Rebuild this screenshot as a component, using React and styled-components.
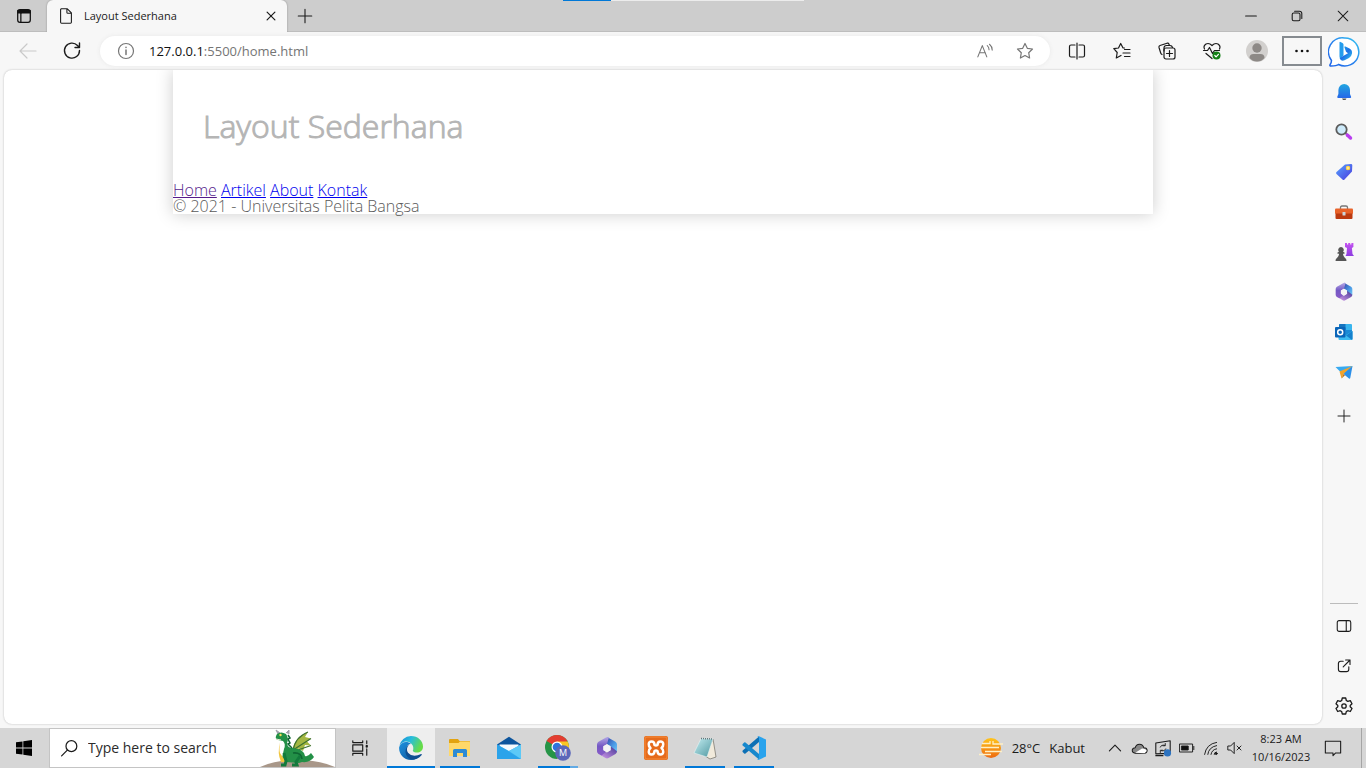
import React from 'react';
import styled, { createGlobalStyle } from 'styled-components';

const GlobalStyle = createGlobalStyle`
  * { box-sizing: border-box; }
  body { margin: 0; font-family: "Open Sans", "Noto Sans", sans-serif; color: #1b1b1b; }
  button { font: inherit; color: inherit; }
`;

const Window = styled.div`
  display: flex;
  flex-direction: column;
  min-height: 100vh;
  background: #f7f7f7;
`;

const TitleBar = styled.header`
  display: flex;
  position: relative;
  height: 32px;
  background: #cdcdcd;
  border-bottom: 1px solid #bdbdbd;
`;

const LoadStrip = styled.div`
  position: absolute;
  top: 0;
  left: 563px;
  width: 241px;
  height: 1px;
  background: linear-gradient(to right, #0078d7 48px, #ececec 48px);
`;

const IconButton = styled.button`
  display: flex;
  flex: none;
  align-items: center;
  justify-content: center;
  width: ${(p) => p.$w || 40}px;
  height: ${(p) => p.$h || 30}px;
  padding: 0;
  border: ${(p) => (p.$framed ? '2px solid #868b90' : '0')};
  background: transparent;
`;

const Tab = styled.div`
  display: flex;
  align-items: center;
  width: 240px;
  height: 32px;
  padding: 0 4px 0 10px;
  border-radius: 6px 6px 0 0;
  background: #f7f7f7;
  box-shadow: 0 0 2px #8a8a8a;
  clip-path: inset(0 -3px 0 -3px);
`;

const TabTitle = styled.span`
  flex: 1;
  padding-left: 9px;
  font-size: 11px;
  line-height: 16px;
`;

const WindowControls = styled.div`
  display: flex;
  margin-left: auto;
`;

const Body = styled.div`
  display: flex;
  flex: 1;
`;

const Browser = styled.div`
  display: flex;
  flex: 1;
  flex-direction: column;
  min-width: 0;
`;

const Toolbar = styled.div`
  display: flex;
  align-items: center;
  height: 38px;
  padding-left: 8px;
`;

const AddressBar = styled.form`
  display: flex;
  flex: 1;
  align-items: center;
  height: 30px;
  margin: 0 7px 0 4px;
  padding-left: 6px;
  padding-right: 5px;
  border-radius: 15px;
  background: #fff;
  box-shadow: 0 0 4px #e8e8e8;
`;

const Url = styled.span`
  flex: 1;
  padding-left: 3px;
  color: #757575;
  font-size: 13px;
  line-height: 20px;
`;

const Host = styled.span`
  color: #111;
`;

const Actions = styled.div`
  display: flex;
  gap: 5px;
`;

const Viewport = styled.main`
  flex: 1;
  margin: 0 0 4px 4px;
  overflow: hidden;
  border-radius: 8px;
  background: #fff;
  box-shadow: 0 0 2px #b4b4b4;
`;

const Container = styled.div`
  width: 980px;
  max-width: 100%;
  margin: 0 auto;
  box-shadow: 0 0 16px #ccc;
  color: #5a5a5a;
  font-weight: 300;
  font-size: 16px;
  line-height: 16px;
`;

const PageHeader = styled.header`
  padding: 40px 30px;
`;

const Heading = styled.h1`
  margin: 0;
  color: #b5b5b5;
  font-size: 32px;
  font-weight: 300;
  line-height: 32px;
  -webkit-text-stroke: 1px #b5b5b5;
`;

const PageLink = styled.a`
  color: ${(p) => (p.$visited ? '#551a8b' : '#0000ee')};
`;

const Sidebar = styled.aside`
  display: flex;
  flex: none;
  flex-direction: column;
  align-items: center;
  width: 44px;
  padding-bottom: 2px;
`;

const Spacer = styled.div`
  flex: 1;
`;

const Divider = styled.hr`
  width: 28px;
  margin: 0 0 2px;
  border: 0;
  border-top: 1px solid #bcbcbc;
`;

const Taskbar = styled.footer`
  display: flex;
  height: 40px;
  background: #d6d6d6;
`;

const SearchBox = styled.label`
  display: flex;
  align-items: center;
  width: 287px;
  margin-left: 1px;
  padding-left: 10px;
  border: 1px solid #c4c4c4;
  background: #fff;
`;

const SearchInput = styled.input`
  flex: 1;
  min-width: 0;
  padding: 0 0 0 9px;
  border: 0;
  outline: 0;
  background: transparent;
  font-family: inherit;
  font-size: 14px;
  line-height: 20px;
  &::placeholder { color: #2b2b2b; opacity: 1; }
`;

const Apps = styled.nav`
  display: flex;
  gap: 1px;
  margin-left: 3px;
`;

const bars = {
  none: 'none',
  full: 'linear-gradient(#0078d7, #0078d7) bottom / 48px 2px no-repeat',
  open: 'linear-gradient(#0078d7, #0078d7) bottom / 40px 2px no-repeat',
  stack: 'linear-gradient(to right, #0078d7 32px, #62aae4 32px) bottom / 40px 2px no-repeat',
};

const AppButton = styled.button`
  display: flex;
  align-items: center;
  justify-content: center;
  width: 48px;
  height: 40px;
  padding: 0;
  border: 0;
  background: ${(p) => bars[p.$bar || 'none']};
  background-color: ${(p) => (p.$active ? '#eeeeee' : 'transparent')};
`;

const Tray = styled.div`
  display: flex;
  align-items: center;
  margin-left: auto;
  margin-right: 4px;
  padding-right: 10px;
  border-right: 1px solid #a5a5a5;
`;

const Weather = styled.button`
  display: flex;
  align-items: center;
  gap: 9px;
  margin-right: 18px;
  padding: 0;
  border: 0;
  background: transparent;
  font-size: 13px;
  line-height: 20px;
`;

const Clock = styled.time`
  width: 68px;
  font-size: 11px;
  line-height: 18px;
  text-align: center;
  white-space: nowrap;
`;

function Line({ size = 20, color = '#1b1b1b', width = 1.2, children }) {
  return (
    <svg width={size} height={size} viewBox="0 0 20 20" fill="none" stroke={color} strokeWidth={width} strokeLinecap="round" strokeLinejoin="round" aria-hidden="true">
      {children}
    </svg>
  );
}

function Art({ size = 20, box = 20, children }) {
  return (
    <svg width={size} height={size} viewBox={`0 0 ${box} ${box}`} aria-hidden="true">
      {children}
    </svg>
  );
}

const star = 'M10 2.5l2.3 4.8 5.2.7-3.8 3.7.9 5.3-4.6-2.5L5.400 17l.9-5.300L2.500 8l5.200-.7z';

function OfficeMark({ size, id }) {
  return (
    <Art size={size} box={24}>
      <defs>
        <linearGradient id={`${id}a`} x1="0" y1="0" x2="0" y2="1"><stop stopColor="#b3a8e6" /><stop offset=".5" stopColor="#7458c4" /><stop offset="1" stopColor="#8a5cc8" /></linearGradient>
        <linearGradient id={`${id}b`} x1="0" y1="0" x2="1" y2="1"><stop stopColor="#3546a8" /><stop offset=".6" stopColor="#4a9be6" /><stop offset="1" stopColor="#6fc5f5" /></linearGradient>
        <linearGradient id={`${id}c`} x1="0" y1="1" x2="1" y2="0"><stop stopColor="#d39bea" /><stop offset="1" stopColor="#453696" /></linearGradient>
      </defs>
      <path d="M12 1 20.500 5.800Q22 6.700 22 8.500v7L15.800 13.500v-3L12 8z" fill={`url(#${id}b)`} />
      <path d="M22 15.200q0 1.800-1.500 2.700L13.500 22q-1.500.8-3 0L5 18.700l3-3.200 4 1 3.800-2.500V10.500z" fill={`url(#${id}c)`} />
      <path d="M14 1.300 12 8 8.200 10.300v3.500L11 16l-4.500 3.500-3-1.600Q2 17 2 15.200V8.500Q2 6.700 3.500 5.800L11 1.400q1.500-.8 3-.1z" fill={`url(#${id}a)`} />
      <path d="m12 8.200 3.600 2v4L12 16.200l-3.600-2v-4z" fill="#f4f4f6" />
    </Art>
  );
}

const BingMark = () => (
  <Art size={32} box={32}>
    <defs>
      <linearGradient id="bingRing" x1="0" y1="1" x2="1" y2="0"><stop stopColor="#1b62e8" /><stop offset=".5" stopColor="#2b84ee" /><stop offset="1" stopColor="#35c5f1" /></linearGradient>
      <linearGradient id="bingB" x1="0" y1="0" x2="1" y2="1"><stop stopColor="#25b7ef" /><stop offset=".5" stopColor="#1c6fe6" /><stop offset="1" stopColor="#35d0ee" /></linearGradient>
    </defs>
    <path d="M16.500 2a14 14 0 1 1-6 26.500q-2 1.500-7.500 1.500-1.500 0-1-1.200 1.500-2 1.500-4.300A14 14 0 0 1 16.500 2z" fill="#fff" stroke="url(#bingRing)" strokeWidth="1.500" />
    <path d="M11.500 6.500q0-1 1-.6l2 1.100q1 .5 1 1.500v11l-3 3q-1-.7-1-2z" fill="#249cec" />
    <path d="M16.500 11.500q-.7-1.500 1-1l4 2q3 1.500 2.500 5-.5 3-3 4.500l-4.500 2.300q-3 1.200-4.500-1.300l-.3-1 8.300-4.800-2-1.500z" fill="url(#bingB)" />
  </Art>
);

const BellIcon = () => (
  <Art>
    <defs><linearGradient id="bell" x1="0" y1="0" x2="0" y2="1"><stop stopColor="#22a7e0" /><stop offset="1" stopColor="#2667e8" /></linearGradient></defs>
    <path d="M8 16.500h4.500l-1 1.500H9z" fill="#555" />
    <path d="M10.200 2A6 6 0 0 1 16 8v4l1.200 3q0 1-1 1h-12q-1 0-1-1L4.400 12V8a6 6 0 0 1 5.800-6z" fill="url(#bell)" />
  </Art>
);

const MagnifierIcon = () => (
  <Art>
    <path d="m11.500 11 2 2" stroke="#777" strokeWidth="2" />
    <circle cx="7.500" cy="7.500" r="5.200" fill="#cdeafa" stroke="#5c5c5c" strokeWidth="1.800" />
    <path d="m13.300 13 3.200 3" stroke="#b93df0" strokeWidth="3.400" strokeLinecap="round" />
  </Art>
);

const TagIcon = () => (
  <Art>
    <defs><linearGradient id="tag" x1="0" y1="0" x2="1" y2="1"><stop stopColor="#58a5ff" /><stop offset="1" stopColor="#4838dd" /></linearGradient></defs>
    <path d="M11 2.500 17 2q1.300 0 1.300 1.300l-.3 6.200-7.500 8q-1 1-2 0L2.500 12q-1-1 0-2z" fill="url(#tag)" />
    <circle cx="14" cy="6" r="1.500" fill="#fff" stroke="#ffd54a" strokeWidth="1.500" />
  </Art>
);

const ToolboxIcon = () => (
  <Art>
    <path d="M6.500 7V5.500Q6.500 4 8 4h4q1.500 0 1.500 1.500V7" fill="none" stroke="#777" strokeWidth="1.300" />
    <rect x="1" y="6.500" width="18" height="5.500" rx="1" fill="#e8632a" />
    <path d="M1.500 11.500h17V16q0 1-1 1h-15q-1 0-1-1z" fill="#bc3a10" />
    <rect x="8.500" y="10" width="3" height="3.500" rx=".5" fill="#cdd5da" />
  </Art>
);

const GamesIcon = () => (
  <Art>
    <defs><linearGradient id="rook" x1="0" y1="0" x2="0" y2="1"><stop stopColor="#c553f0" /><stop offset="1" stopColor="#8c3de0" /></linearGradient></defs>
    <path d="M11 1h2v1.500h1.200V1h2v1.500h1.200V1h2v4l-1.500 1 .6 6 1.500 2h-8.500l1-2 .5-6-2-1z" fill="url(#rook)" />
    <path d="M7 5a2.800 2.800 0 0 1 2 4.700l1.500.8v1.200H9q.2 2.800 2 4.300 1.500.5 1.500 3h-11q0-2.500 1.500-3 2-1.500 2-4.300H3.500v-1.200L5 9.700A2.800 2.800 0 0 1 7 5z" fill="#555" />
  </Art>
);

const OutlookIcon = () => (
  <Art>
    <rect x="5" y="2" width="13" height="14" rx="1" fill="#38b5ee" />
    <path d="M5 3q0-1 1-1h5.500v6H5z" fill="#1675bf" />
    <path d="M11.500 8H18v5l-6.500 3z" fill="#1b8ad6" />
    <path d="m4.500 12.500 7.500.5 6.500-4v8q0 1-1 1h-12q-1 0-1-1z" fill="#3dbcf2" />
    <path d="m12 13.500 6.500-4.500v8q0 .7-.7.8z" fill="#1580cc" />
    <rect x="1" y="5" width="10.500" height="10.500" rx="1" fill="#0a65b8" />
    <circle cx="6.200" cy="10.200" r="2.500" fill="none" stroke="#fff" strokeWidth="1.500" />
  </Art>
);

const PlaneIcon = () => (
  <Art>
    <path d="M1.500 5 18.500 4l-6.500 8-6-2.500z" fill="#39aaf0" />
    <path d="M18.500 4 5.500 9.500l2 7L9.500 12z" fill="#f2a32b" />
    <path d="m18.500 4-9 8 5.500 4.500q1 .5 1.300-.7z" fill="#2b8fe8" />
    <path d="M9.500 12 7.500 16.500 11 13.300z" fill="#b8721a" />
  </Art>
);

const Dragon = () => (
  <svg width="75" height="38" viewBox="0 0 75 38" aria-hidden="true">
    <path d="M0 38Q15 31 37 31T75 38z" fill="#a89789" />
    <path d="M32 21Q35 8 48 3l-3 5 6 1.500-4 3 4 4-6-.5-2 6-4-2.500-5 3z" fill="#a4b743" />
    <path d="M33 22Q35 8 48 3M33 21l18-11.500M35 22l16-5.500" fill="none" stroke="#3d7030" strokeWidth="1.200" />
    <path d="m18 5-2-4 4 3m6 0 3-3v4" fill="#a3a0ad" stroke="#a3a0ad" />
    <path d="M17 5q4-3 9 0 3 4 1 9 0 5 6 5 11 1 12 8 3 1 6-3l3 4q-4 6-12 5l-3 1-13-1-4-4 2-9q2-5-1-8l-5-1q-3-1-2-4z" fill="#239047" />
    <path d="M20 13q-1 7 0 11l6 9-5 0q-4-9-1-20z" fill="#f2c63e" />
    <path d="m28 6 2 3-2 1 2 4-2 1 4 4M33 24q8-1 9 6" fill="none" stroke="#0f6633" strokeWidth="1.500" />
    <path d="m24 24 2 8-1 4h-4m19-9-4 6 1 3h-5" fill="none" stroke="#137a3c" strokeWidth="3" />
    <circle cx="20.500" cy="6" r="1.200" fill="#f5de57" />
    <path d="m16 10 5 1" stroke="#e8e6d2" />
  </svg>
);

const EdgeIcon = () => (
  <Art size={24} box={24}>
    <defs>
      <linearGradient id="edgeTop" x1="0" y1="0" x2="1" y2=".4"><stop stopColor="#1687d8" /><stop offset=".5" stopColor="#28bddb" /><stop offset="1" stopColor="#66dc48" /></linearGradient>
      <linearGradient id="edgeLow" x1="0" y1="0" x2="1" y2="1"><stop stopColor="#1b91df" /><stop offset="1" stopColor="#0b4d91" /></linearGradient>
    </defs>
    <path d="M.3 10A12 12 0 0 1 12 0c7 0 12 5 12 10.500 0 4-3 6-6 6-3.500 0-5-1.500-3.700-3Q15 8.500 10 6 4 4 .3 10z" fill="url(#edgeTop)" />
    <path d="M.2 11C2 6 8 4.500 12 8q-4 0-4.500 5Q8 21 16 21q3 0 6.200-2.500Q18 24 12 24C4 24-.5 17 .2 11z" fill="url(#edgeLow)" />
    <path d="M10 8.700q-3.500 4-1 8 4.500 5.300 13.300 1.300 1 0 .2 1.200-4 4.300-9 4.300-6-1-7-7 0-6 3.500-7.800z" fill="#0c4e91" />
  </Art>
);

const FolderIcon = () => (
  <Art size={24} box={24}>
    <path d="M1 4q0-1 1-1h8l1.500 2H21q1 0 1 1v3H1z" fill="#e2a310" />
    <path d="M1 7h9.500L12 5.500h9q1 0 1 1V20H1z" fill="#ffd869" />
    <path d="M5 21v-6.500Q5 13 6.500 13h11q1.500 0 1.500 1.500V21h-4v-4H9v4z" fill="#2d8bd5" />
  </Art>
);

const MailIcon = () => (
  <Art size={24} box={24}>
    <path d="M0 8.500 12 .8l12 7.700V14H0z" fill="#0d559d" />
    <path d="M2.500 8.500h19v5L12 17l-9.500-4z" fill="#f5fafd" />
    <path d="M0 8.500V23h24V8.500L12 15z" fill="#35aef0" />
    <path d="M0 8.500 24 23H0z" fill="#2ba3ea" />
    <path d="m12 15 12-6.500V23z" fill="#5cc9f7" />
  </Art>
);

const ChromeIcon = () => (
  <Art size={26} box={26}>
    <circle cx="12" cy="12" r="12" fill="#269447" />
    <path d="M12 12 1.600 6A12 12 0 0 1 22.400 6z" fill="#e33d31" />
    <path d="M12 6.500h10.700A12 12 0 0 1 12 24l5-9z" fill="#fac625" />
    <circle cx="12" cy="12" r="5.500" fill="#fff" />
    <circle cx="12" cy="12" r="4.300" fill="#2d73dd" />
    <circle cx="18" cy="18" r="7.800" fill="#5b67b9" />
    <text x="18" y="21" textAnchor="middle" fontSize="9" fontFamily="Open Sans, sans-serif" fill="#fff">M</text>
  </Art>
);

const XamppIcon = () => (
  <Art size={24} box={24}>
    <rect width="24" height="24" rx="2" fill="#e66b1c" />
    <rect x="1" y="1" width="22" height="22" rx="2" fill="none" stroke="#f58d3b" />
    <path d="M7.500 5.500C10 5.500 10.500 7 10.500 9q1.500 1 3 0c0-2 .5-3.500 3-3.500 3.500 0 3.500 4.500 1 6.500 2.500 2 2.500 6.500-1 6.500-2.500 0-3-1.500-3-3.500q-1.500-1-3 0c0 2-.5 3.500-3 3.500-3.500 0-3.500-4.500-1-6.500-2.500-2-2.500-6.500 1-6.500z" fill="none" stroke="#fff" strokeWidth="2.500" strokeLinejoin="round" />
  </Art>
);

const NotepadIcon = () => (
  <Art size={24} box={24}>
    <defs><linearGradient id="note" x1="0" y1="0" x2="1" y2="1"><stop stopColor="#c5eef2" /><stop offset="1" stopColor="#4d969f" /></linearGradient></defs>
    <path d="m20 3 3 18-6 2-5-3z" fill="#f1eadb" stroke="#5d5a50" strokeWidth=".6" />
    <path d="M8 2.500 20 3 14 21 1 17z" fill="url(#note)" stroke="#e6f4f4" strokeWidth=".6" />
    <path d="m8 2.500 12 .5" stroke="#62777b" strokeWidth="1.500" strokeDasharray="1 1" />
  </Art>
);

const CodeIcon = () => (
  <Art size={24} box={24}>
    <path d="M17 6 3.500 17.500q-.7.500-1.300 0L.7 16q-.6-.8 0-1.400L17 .5z" fill="#0d70b5" />
    <path d="M17 18 3.500 6.500q-.7-.5-1.300 0L.7 8q-.6.800 0 1.400L17 23.500z" fill="#1688cd" />
    <path d="M16.500 0 24 3.500v17L16.500 24q-1 0-1.500-1 2 1 2-1V2q0-2-2-1z" fill="#29a3ed" />
  </Art>
);

const SunIcon = () => (
  <Art size={24} box={24}>
    <defs><linearGradient id="sun" x1="0" y1="0" x2="0" y2="1"><stop stopColor="#ffc51c" /><stop offset="1" stopColor="#ed690f" /></linearGradient></defs>
    <circle cx="12" cy="12" r="10" fill="url(#sun)" />
    <path d="M3 7.500h8V5M14 5v3h10M2 11.500h18M6 15.500h17M0 18.500h12" fill="none" stroke="#fff0c5" strokeWidth="1.300" />
  </Art>
);

const WindowsIcon = () => (
  <Art size={16} box={16}>
    <path d="M0 2.300 6.500 1.400v6.200H0zM7.300 1.300 16 0v7.600H7.300zM0 8.400h6.500v6.200L0 13.700zM7.300 8.400H16V16l-8.700-1.300z" fill="#000" />
  </Art>
);

const sideApps = [
  ['Notifications', <BellIcon />],
  ['Search', <MagnifierIcon />],
  ['Shopping', <TagIcon />],
  ['Tools', <ToolboxIcon />],
  ['Games', <GamesIcon />],
  ['Microsoft 365', <OfficeMark size={20} id="side" />],
  ['Outlook', <OutlookIcon />],
  ['Drop', <PlaneIcon />],
];

const taskApps = [
  ['Microsoft Edge', <EdgeIcon />, 'full'],
  ['File Explorer', <FolderIcon />, 'open'],
  ['Mail', <MailIcon />, 'none'],
  ['Google Chrome', <ChromeIcon />, 'stack'],
  ['Microsoft 365', <OfficeMark size={24} id="task" />, 'none'],
  ['XAMPP', <XamppIcon />, 'none'],
  ['Notepad', <NotepadIcon />, 'open'],
  ['Visual Studio Code', <CodeIcon />, 'open'],
];

const plus = <path d="M10 2.500v15M2.500 10h15" />;

export default function App() {
  return (
    <Window>
      <GlobalStyle />
      <TitleBar>
        <LoadStrip />
        <IconButton $w={47} $h={32} aria-label="Tab actions">
          <Line size={18} color="#111" width={1.4}>
            <rect x="3" y="3" width="14" height="14" rx="2.500" />
            <path d="M3.500 4.500h13M3.500 6h13" strokeWidth="2.500" />
            <path d="M6.500 7v10" />
          </Line>
        </IconButton>
        <Tab>
          <Line size={18} width={1.2}>
            <path d="M4.500 2h7L16 6.500V17q0 1-1 1H5q-1 0-1-1V3q0-1 1-1zM11 2v4q0 1 1 1h4" />
          </Line>
          <TabTitle>Layout Sederhana</TabTitle>
          <IconButton $w={24} $h={24} aria-label="Close tab">
            <Line size={12} width={2}><path d="m3.500 3.500 13 13m0-13-13 13" /></Line>
          </IconButton>
        </Tab>
        <IconButton $w={36} $h={32} aria-label="New tab"><Line size={18}>{plus}</Line></IconButton>
        <WindowControls>
          <IconButton $w={46} $h={32} aria-label="Minimize"><Line size={12} width={1.7}><path d="M1 10h18" /></Line></IconButton>
          <IconButton $w={46} $h={32} aria-label="Restore">
            <Line size={12} width={1.8}><rect x="2" y="5" width="13" height="13" rx="2.500" /><path d="M6 2h8q4 0 4 4v8" /></Line>
          </IconButton>
          <IconButton $w={46} $h={32} aria-label="Close"><Line size={12} width={1.7}><path d="m2 2 16 16M18 2 2 18" /></Line></IconButton>
        </WindowControls>
      </TitleBar>
      <Body>
        <Browser>
          <Toolbar>
            <IconButton aria-label="Back"><Line color="#c9c9c9"><path d="M18 10H2.500M9 3l-7 7 7 7" /></Line></IconButton>
            <IconButton $w={48} aria-label="Refresh"><Line width={1.4}><path d="M17.500 9.500a7.500 7.500 0 1 1-2-5l2 2M17.500 2v4.500H13" /></Line></IconButton>
            <AddressBar>
              <IconButton type="button" aria-label="Site information">
                <Line color="#767676"><circle cx="10" cy="10" r="7.500" /><path d="M10 9v4.500M10 6.300v.2" strokeWidth="1.500" /></Line>
              </IconButton>
              <Url><Host>127.0.0.1</Host>:5500/home.html</Url>
              <IconButton type="button" aria-label="Read aloud">
                <Line size={18} color="#767676"><path d="M2 16.500 7 4l5 12.500M4 12h6.500M12.500 4q2 1.500 2 4.500M15 2.500q3 2.500 3 6.500" /></Line>
              </IconButton>
              <IconButton type="button" aria-label="Add favorite"><Line color="#767676"><path d={star} /></Line></IconButton>
            </AddressBar>
            <Actions>
              <IconButton aria-label="Split screen">
                <Line><path d="M8 4H4Q2.500 4 2.500 5.500v9Q2.500 16 4 16h4M12 4h4q1.500 0 1.500 1.500v9q0 1.500-1.500 1.500h-4M10 2v16" /></Line>
              </IconButton>
              <IconButton aria-label="Favorites">
                <Line><path d="M12.500 7 10.900 6.800 8.700 2.500 6.500 7l-4.700.7L5.200 11.500 4.300 17l4.700-2.500M12.500 8.500H18M11 12h7M12.500 15.500H18" /></Line>
              </IconButton>
              <IconButton aria-label="Collections">
                <Line><rect x="7" y="7" width="11" height="11" rx="2" /><path d="M12.500 9.500v6M9.500 12.500h6M5 13.500q-1-.5-1.300-1.500L2 6.500Q1.600 5 3 4.500L10 2.200q1.500-.4 2 1l.4 1.300M7 10V7q0-2.500 2.500-2.500H13q2 0 2.500 2" /></Line>
              </IconButton>
              <IconButton aria-label="Browser essentials">
                <Line><path d="M2.500 8Q1 5 4 3q3-1.500 6 1.500Q13 1.500 16 3q3 2 1.500 5M1.500 9.500h4l2-3 3 6 2-3h5M4 12.500l6 5" /><circle cx="14.500" cy="14.500" r="4" fill="#148016" stroke="none" /><path d="m12.800 14.500 1.300 1.300 2.300-2.500" stroke="#fff" /></Line>
              </IconButton>
              <IconButton aria-label="Profile">
                <Art size={22} box={22}><circle cx="11" cy="11" r="11" fill="#d2d0ce" /><circle cx="11" cy="8" r="4.700" fill="#8d8986" /><path d="M3.500 18q0-4 4-4h7q4 0 4 4-3 3.500-7.500 3.500T3.500 18z" fill="#8d8986" /></Art>
              </IconButton>
              <IconButton $framed aria-label="Settings and more">
                <Art><g fill="#111"><circle cx="4.500" cy="10" r="1.300" /><circle cx="10" cy="10" r="1.300" /><circle cx="15.500" cy="10" r="1.300" /></g></Art>
              </IconButton>
            </Actions>
          </Toolbar>
          <Viewport>
            <Container>
              <PageHeader><Heading>Layout Sederhana</Heading></PageHeader>
              <nav>
                <PageLink $visited href="#home">Home</PageLink>{' '}
                <PageLink href="#artikel">Artikel</PageLink>{' '}
                <PageLink href="#about">About</PageLink>{' '}
                <PageLink href="#kontak">Kontak</PageLink>
              </nav>
              <footer>© 2021 - Universitas Pelita Bangsa</footer>
            </Container>
          </Viewport>
        </Browser>
        <Sidebar>
          <IconButton $w={44} $h={40} aria-label="Bing chat"><BingMark /></IconButton>
          {sideApps.map(([name, icon]) => (
            <IconButton key={name} $h={40} aria-label={name}>{icon}</IconButton>
          ))}
          <IconButton $h={48} aria-label="Customize"><Line size={16}>{plus}</Line></IconButton>
          <Spacer />
          <Divider />
          <IconButton $h={40} aria-label="Hide sidebar">
            <Line size={18}><rect x="2.500" y="4" width="15" height="12" rx="2" /><path d="M12.500 4v12" /></Line>
          </IconButton>
          <IconButton $h={40} aria-label="Open in new window">
            <Line size={16} width={1.4}><path d="M9 4H6Q3 4 3 7v7q0 3 3 3h7q3 0 3-3v-3M12 2.500h5.500V8M17.500 2.500 9 11" /></Line>
          </IconButton>
          <IconButton $h={40} aria-label="Settings">
            <Line size={20} width={1.3}><path d="M8.300 2h3.400l.6 2.500 1.500.9 2.500-.8L18 7.700 16.200 9.500v1.300L18 12.500l-1.700 3-2.500-.8-1.500.9-.6 2.400H8.300l-.6-2.400-1.500-.9-2.500.8-1.700-3 1.800-1.700V9.500L2 7.700l1.700-3.100 2.500.8 1.500-.9z" /><circle cx="10" cy="10" r="2.200" /></Line>
          </IconButton>
        </Sidebar>
      </Body>
      <Taskbar>
        <AppButton aria-label="Start"><WindowsIcon /></AppButton>
        <SearchBox>
          <Line size={19} width={1.3}><circle cx="12" cy="7.500" r="5.700" /><path d="m7.700 11.700-6 6" /></Line>
          <SearchInput type="text" placeholder="Type here to search" aria-label="Search" />
          <Dragon />
        </SearchBox>
        <AppButton aria-label="Task view">
          <Line size={18} width={1.3}><path d="M2 2v2h11V2M2 18v-2h11v2M2 6.500h11v7H2zM17.500 2v3M17.500 11v7" /><path d="M17.500 7.500v1" strokeWidth="2.500" /></Line>
        </AppButton>
        <Apps>
          {taskApps.map(([name, icon, bar]) => (
            <AppButton key={name} aria-label={name} $bar={bar} $active={bar === 'full'}>{icon}</AppButton>
          ))}
        </Apps>
        <Tray>
          <Weather><SunIcon /><span>28°C</span><span>Kabut</span></Weather>
          <IconButton $w={24} aria-label="Show hidden icons"><Line size={14} width={1.6}><path d="m2 14 8-8 8 8" /></Line></IconButton>
          <IconButton $w={24} aria-label="OneDrive">
            <Line size={17}><path d="M5 15.500Q1 15 1.500 11.500 2 9 5 9q1-4 5-4t5 4q4 0 4 3.500-.5 3-3 3z" fill="#888" /><path d="m5 15 8-5q5 0 5.500 3l-2.500 2.500z" fill="#fff" stroke="none" /></Line>
          </IconButton>
          <IconButton $w={24} aria-label="Updates">
            <Line size={18}><path d="M2 4.500 18 2v14L2 16.500zM2 18.500h8" /><path d="M7 9q1-3 5-2M12.500 5v2.500H10M13 11q-1 3-5 2M7 15v-2.500h2.500" strokeWidth="1" /><circle cx="15" cy="15.500" r="4" fill="#2d73c0" stroke="none" /></Line>
          </IconButton>
          <IconButton $w={24} aria-label="Battery">
            <Line size={16}><rect x="1" y="5" width="16" height="10" /><path d="M18.500 8v4" /><path d="M3.500 7.500h8v5h-8z" fill="#111" /></Line>
          </IconButton>
          <IconButton $w={24} aria-label="Network">
            <Line size={16}><path d="M2 18Q4 5 17 3M6 18Q7 9 17 7M10 18q1-6 7-7M14 18q0-3 3-3" /><circle cx="16.500" cy="17" r="1.200" fill="#111" /></Line>
          </IconButton>
          <IconButton $w={24} aria-label="Volume muted">
            <Line size={16}><path d="M1.500 7.500h3L9 3v14l-4.500-4.500h-3zM12.500 7.500l5 5m0-5-5 5" /></Line>
          </IconButton>
          <Clock>8:23 AM<br />10/16/2023</Clock>
          <IconButton $w={36} aria-label="Notifications">
            <Line size={18}><path d="M1.500 2.500h17v13h-5.500L10 18.500v-3H1.500z" /></Line>
          </IconButton>
        </Tray>
      </Taskbar>
    </Window>
  );
}
